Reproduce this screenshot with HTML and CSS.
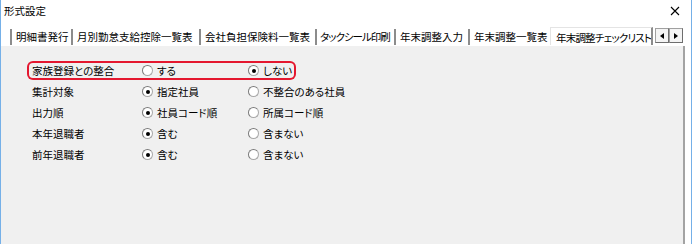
FILE: index.html
```html
<!DOCTYPE html>
<html lang="ja">
<head>
  <meta charset="UTF-8">
  <title>形式設定</title>
  <link rel="stylesheet" href="styles.css">
</head>
<body>
  <div class="window">
    <div class="titlebar">
      <span class="title">形式設定</span>
      <svg class="close" width="10" height="10" viewBox="0 0 10 10">
        <path d="M1 1 L9 9 M9 1 L1 9" stroke="#000" stroke-width="1.1" fill="none"/>
      </svg>
    </div>

    <div class="tabstrip">
      <div class="tab t1">明細書発行</div>
      <div class="tab t2">月別勤怠支給控除一覧表</div>
      <div class="tab t3">会社負担保険料一覧表</div>
      <div class="tab t4">タックシール印刷</div>
      <div class="tab t5">年末調整入力</div>
      <div class="tab t6">年末調整一覧表</div>
      <div class="tab selected">年末調整チェックリスト</div>
      <div class="scroller">
        <span class="arrow left"></span>
        <span class="arrow right"></span>
      </div>
    </div>

    <div class="panel">
      <div class="rows">
        <div class="row hl">
          <span class="label">家族登録との整合</span>
          <span class="opt"><i class="radio"></i>する</span>
          <span class="opt"><i class="radio on"></i>しない</span>
        </div>
        <div class="row">
          <span class="label">集計対象</span>
          <span class="opt"><i class="radio on"></i>指定社員</span>
          <span class="opt"><i class="radio"></i>不整合のある社員</span>
        </div>
        <div class="row">
          <span class="label">出力順</span>
          <span class="opt"><i class="radio on"></i>社員コード順</span>
          <span class="opt"><i class="radio"></i>所属コード順</span>
        </div>
        <div class="row">
          <span class="label">本年退職者</span>
          <span class="opt"><i class="radio on"></i>含む</span>
          <span class="opt"><i class="radio"></i>含まない</span>
        </div>
        <div class="row">
          <span class="label">前年退職者</span>
          <span class="opt"><i class="radio on"></i>含む</span>
          <span class="opt"><i class="radio"></i>含まない</span>
        </div>
      </div>
    </div>
  </div>
</body>
</html>
```

FILE: styles.css
```css
* {
  margin: 0;
  padding: 0;
  box-sizing: border-box;
}

body {
  width: 692px;
  height: 244px;
  overflow: hidden;
  background: #fff;
  font-family: "Noto Sans CJK JP", "Noto Sans", sans-serif;
  font-size: 10.5px;
  font-feature-settings: "palt";
  color: #000;
}

.window {
  height: 244px;
  border-left: 1px solid #75b0e8;
  border-right: 1px solid #75b0e8;
  display: flex;
  flex-direction: column;
}

/* title bar */

.titlebar {
  height: 21px;
  background: #fff;
  display: flex;
  align-items: center;
  justify-content: space-between;
  padding: 0 11px 0 3px;
}

.title {
  line-height: 21px;
}

/* tabs */

.tabstrip {
  height: 25px;
  background: #fff;
  display: flex;
  align-items: flex-start;
  padding: 8px 0 0 9px;
}

.tab {
  height: 16px;
  line-height: 15px;
  padding-left: 4px;
  white-space: nowrap;
  overflow: hidden;
  border-left: 2px solid #8c8c8c;
}

.t1 { width: 61px; }
.t2 { width: 128px; }
.t3 { width: 116px; }
.t4 { width: 79px; padding-left: 3px; letter-spacing: -1px; }
.t5 { width: 74px; }
.t6 { width: 82px; }

.tab.selected {
  width: 103px;
  height: 18px;
  margin-top: -2px;
  line-height: 19px;
  padding-left: 5px;
  border-left: 1px solid #e4e4e4;
  border-top: 1px solid #e4e4e4;
  border-right: 2px solid #8c8c8c;
  letter-spacing: -0.8px;
}

.scroller {
  display: flex;
  margin-left: 2px;
  margin-top: -1px;
}

.arrow {
  width: 14px;
  height: 15px;
  border: 1px solid #a0a0a0;
  border-bottom-color: #6e6e6e;
  border-right-color: #6e6e6e;
  background: #f4f4f4;
  display: flex;
  align-items: center;
  justify-content: center;
}

.arrow::after {
  content: "";
  border-top: 3px solid transparent;
  border-bottom: 3px solid transparent;
}

.arrow.left::after {
  border-right: 4px solid #000;
}

.arrow.right::after {
  border-left: 4px solid #000;
}

/* panel */

.panel {
  flex: 1;
  background: #f0f0f0;
  margin-right: 6px;
  border-right: 2px solid #a3a3a3;
  padding: 17px 0 0 28px;
}

.rows {
  display: flex;
  flex-direction: column;
  gap: 6px;
}

.row {
  width: 265px;
  height: 15px;
  padding-left: 3px;
  display: grid;
  grid-template-columns: 110px 106px auto;
  align-items: center;
  line-height: 15px;
  white-space: nowrap;
}

.row.hl {
  border-radius: 4px;
  box-shadow: 0 0 0 2px #e4172f;
}

.opt {
  display: flex;
  align-items: center;
}

.radio {
  width: 11px;
  height: 11px;
  margin-right: 4px;
  border-radius: 50%;
  background: #fff;
  border: 1px solid #a8a8a8;
  border-top-color: #7a7a7a;
  border-left-color: #7a7a7a;
  display: flex;
  align-items: center;
  justify-content: center;
}

.radio.on::after {
  content: "";
  width: 4px;
  height: 4px;
  border-radius: 50%;
  background: #000;
}
```
